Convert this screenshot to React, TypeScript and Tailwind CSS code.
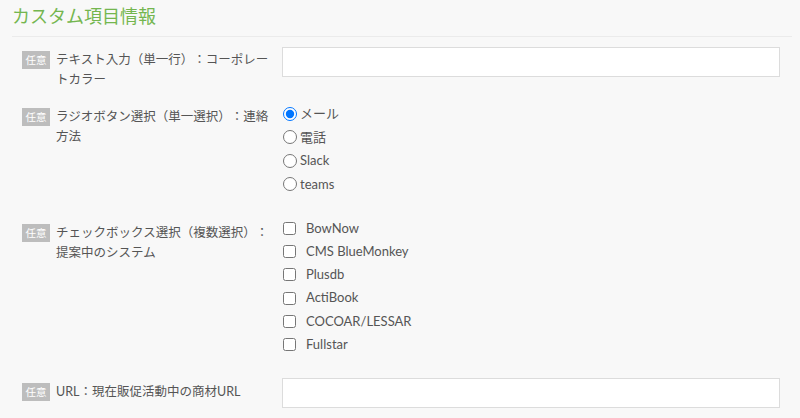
const radios = ["メール", "電話", "Slack", "teams"];
const systems = ["BowNow", "CMS BlueMonkey", "Plusdb", "ActiBook", "COCOAR/LESSAR", "Fullstar"];

function Optional() {
  return (
    <span className="mt-px flex h-[18px] w-[28px] shrink-0 items-center justify-center bg-[#bdbdbd] text-[10.5px] leading-none text-white">
      任意
    </span>
  );
}

function FieldLabel({ children, className = "" }: { children: React.ReactNode; className?: string }) {
  return (
    <div className={`flex w-[260px] shrink-0 items-start gap-[6px] ${className}`}>
      <Optional />
      <p className="w-[214px] text-[12.5px] leading-[20px] text-[#555]">{children}</p>
    </div>
  );
}

export default function App() {
  return (
    <div className="min-h-screen bg-[#f8f8f8] pl-[12px] pr-[8px] pt-[3px] font-['Lato','Noto_Sans_CJK_JP',sans-serif] [text-spacing-trim:space-all]">
      <h2 className="text-[18px] leading-[26px] text-[#74b64f]">カスタム項目情報</h2>
      <div className="mt-[7px] h-px bg-[#ebebeb]" />

      <div className="flex flex-col pl-[10px] pr-[12px]">
        {/* text input */}
        <div className="mt-[10px] flex items-start">
          <FieldLabel className="pt-[3px]">テキスト入力（単一行）：コーポレートカラー</FieldLabel>
          <input type="text" className="h-[30px] flex-1 border border-[#dcdcdc] bg-white px-2 text-[13px] outline-none" />
        </div>

        {/* radio group */}
        <div className="mt-[12px] flex items-start">
          <FieldLabel className="pt-[5px]">ラジオボタン選択（単一選択）：連絡方法</FieldLabel>
          <div className="flex flex-col">
            {radios.map((r, i) => (
              <label key={r} className="flex h-[23.5px] items-center gap-[3px] text-[13px] text-[#555]">
                <input type="radio" name="contact" defaultChecked={i === 0} className="m-0 ml-px h-[14px] w-[14px]" />
                {r}
              </label>
            ))}
          </div>
        </div>

        {/* checkbox group */}
        <div className="mt-[21px] flex items-start">
          <FieldLabel className="pt-[6px]">チェックボックス選択（複数選択）：提案中のシステム</FieldLabel>
          <div className="flex flex-col">
            {systems.map((s) => (
              <label key={s} className="flex h-[23.2px] items-center gap-[10px] text-[13px] text-[#555]">
                <input type="checkbox" className="m-0 ml-px h-[13px] w-[13px]" />
                {s}
              </label>
            ))}
          </div>
        </div>

        {/* url */}
        <div className="mt-[22px] flex items-start">
          <FieldLabel className="pt-[4px]">URL：現在販促活動中の商材URL</FieldLabel>
          <input type="text" className="h-[30px] flex-1 border border-[#dcdcdc] bg-white px-2 text-[13px] outline-none" />
        </div>
      </div>
    </div>
  );
}
